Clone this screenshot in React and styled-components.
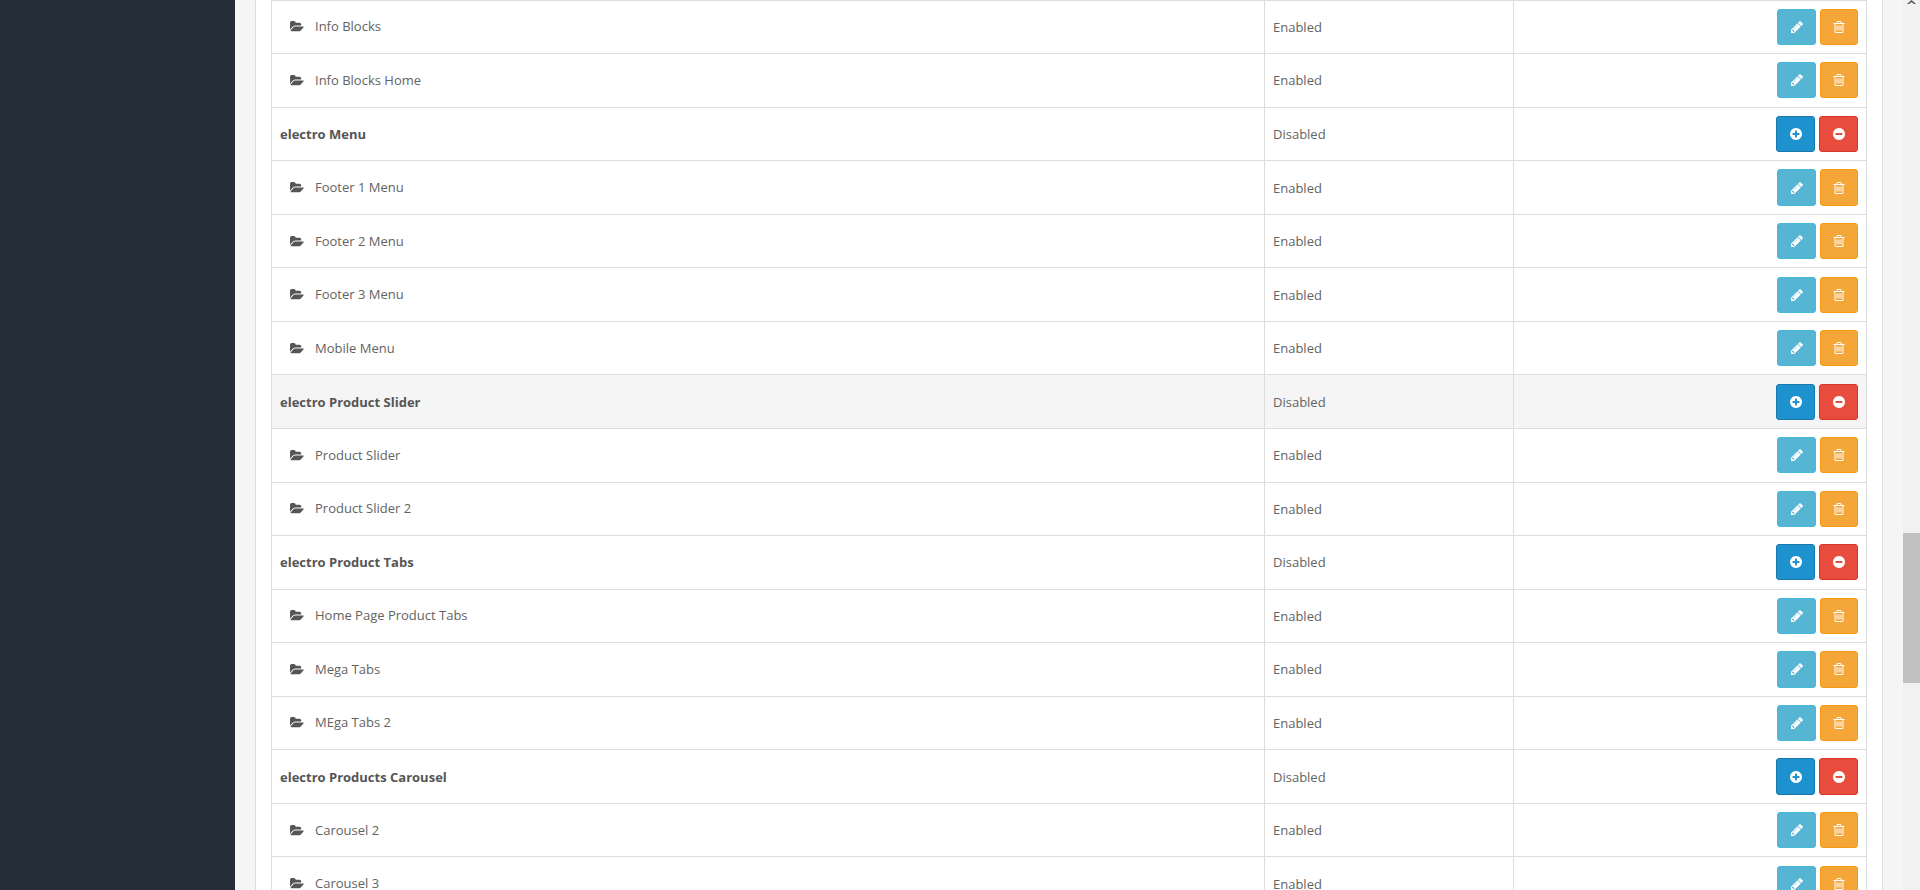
import React from "react";
import styled, { createGlobalStyle } from "styled-components";

const GlobalStyle = createGlobalStyle`
  html, body { margin: 0; padding: 0; height: 100%; overflow: hidden; }
  body { font-family: "Open Sans", sans-serif; font-size: 13px; color: #636363; background: #f5f5f5; }
`;

const Page = styled.div`
  display: flex;
  height: 890px;
  overflow: hidden;
`;
const Sidebar = styled.aside`
  width: 235px;
  flex: none;
  background: #252d39;
`;
const Content = styled.main`
  flex: 1;
  padding: 0 20px;
  min-width: 0;
`;
const Panel = styled.section`
  background: #fff;
  border-left: 1px solid #ddd;
  border-right: 1px solid #ddd;
  padding: 0 15px;
  height: 890px;
  overflow: hidden;
`;
/* the page is scrolled part way through the list */
const Table = styled.table`
  width: 100%;
  margin-top: -0.4px;
  border-collapse: collapse;
  table-layout: fixed;
`;
const Row = styled.tr`
  background: ${(p) => (p.$hover ? "#f5f5f5" : "#fff")};
`;
const Cell = styled.td`
  border: 1px solid #ddd;
  padding: 8px;
  height: 36.56px;
  vertical-align: middle;
  line-height: 18px;
`;
const GroupName = styled.b`
  font-weight: 700;
  color: #555;
`;
const ChildName = styled.span`
  display: inline-flex;
  align-items: center;
  padding: 1px 0 0 10px;
  svg { width: 14px; height: 13px; color: #555; margin: 1px 11px 0 0; }
`;
const Actions = styled.div`
  display: flex;
  justify-content: flex-end;
  gap: 4px;
`;
const Btn = styled.button`
  width: ${(p) => p.$w}px;
  height: 36.14px;
  padding: 0;
  border-radius: 3px;
  border: 1px solid ${(p) => p.$line};
  background: ${(p) => p.$fill};
  color: #fff;
  display: flex;
  align-items: center;
  justify-content: center;
  svg { width: 14px; height: 14px; }
`;
const Scrollbar = styled.div`
  width: 17px;
  flex: none;
  background: #f1f1f1;
  position: relative;
  display: flex;
  flex-direction: column;
  align-items: center;
`;
const Arrow = styled.svg`
  width: 9px;
  height: 4px;
  flex: none;
`;
const Thumb = styled.div`
  position: absolute;
  top: 533px;
  left: 0;
  width: 17px;
  height: 150px;
  background: #c1c1c1;
`;

// font awesome 4 glyph shapes
const paths = {
  folder: "M1879 952q0 31-31 66l-336 396q-43 51-120.5 86.5t-143.5 35.5h-1088q-34 0-60.5-13t-26.5-43q0-31 31-66l336-396q43-51 120.5-86.5t143.5-35.5h1088q34 0 60.5 13t26.5 43zm-343-344v160h-832q-94 0-197 47.5t-164 119.5l-337 396-5 6q0-4-.5-12.5t-.5-12.5v-960q0-92 66-158t158-66h320q92 0 158 66t66 158v32h544q92 0 158 66t66 158z",
  pencil: "M491 1536l91-91-235-235-91 91v107h128v128h107zm523-928q0-22-22-22-10 0-17 7l-542 542q-7 7-7 17 0 22 22 22 10 0 17-7l542-542q7-7 7-17zm-54-192l416 416-832 832h-416v-416zm683 96q0 53-37 90l-166 166-416-416 166-165q36-38 90-38 53 0 91 38l235 234q37 39 37 91z",
  trash: "M704 736v576q0 14-9 23t-23 9h-64q-14 0-23-9t-9-23v-576q0-14 9-23t23-9h64q14 0 23 9t9 23zm256 0v576q0 14-9 23t-23 9h-64q-14 0-23-9t-9-23v-576q0-14 9-23t23-9h64q14 0 23 9t9 23zm256 0v576q0 14-9 23t-23 9h-64q-14 0-23-9t-9-23v-576q0-14 9-23t23-9h64q14 0 23 9t9 23zm128 724v-948h-896v948q0 22 7 40.5t14.5 27 10.5 8.5h832q3 0 10.5-8.5t14.5-27 7-40.5zm-672-1076h448l-48-117q-7-9-17-11h-317q-10 2-17 11zm928 32v64q0 14-9 23t-23 9h-96v948q0 83-47 143.5t-113 60.5h-832q-66 0-113-58.5t-47-141.5v-952h-96q-14 0-23-9t-9-23v-64q0-14 9-23t23-9h309l70-167q15-37 54-63t79-26h320q40 0 79 26t54 63l70 167h309q14 0 23 9t9 23z",
  plus: "M1344 960v-128q0-26-19-45t-45-19h-256v-256q0-26-19-45t-45-19h-128q-26 0-45 19t-19 45v256h-256q-26 0-45 19t-19 45v128q0 26 19 45t45 19h256v256q0 26 19 45t45 19h128q26 0 45-19t19-45v-256h256q26 0 45-19t19-45zm320-64q0 209-103 385.5t-279.5 279.5-385.5 103-385.5-103-279.5-279.5-103-385.5 103-385.5 279.5-279.5 385.5-103 385.5 103 279.5 279.5 103 385.5z",
  minus: "M1344 960v-128q0-26-19-45t-45-19h-768q-26 0-45 19t-19 45v128q0 26 19 45t45 19h768q26 0 45-19t19-45zm320-64q0 209-103 385.5t-279.5 279.5-385.5 103-385.5-103-279.5-279.5-103-385.5 103-385.5 279.5-279.5 385.5-103 385.5 103 279.5 279.5 103 385.5z",
};

const Icon = ({ name }) => (
  <svg viewBox={name === "folder" ? "0 0 1920 1792" : "0 0 1792 1792"} fill="currentColor">
    <path d={paths[name]} />
  </svg>
);

const rows = [
  ["Info Blocks", 1], ["Info Blocks Home", 1], ["electro Menu", 0],
  ["Footer 1 Menu", 1], ["Footer 2 Menu", 1], ["Footer 3 Menu", 1], ["Mobile Menu", 1],
  ["electro Product Slider", 0, true], ["Product Slider", 1], ["Product Slider 2", 1],
  ["electro Product Tabs", 0], ["Home Page Product Tabs", 1], ["Mega Tabs", 1], ["MEga Tabs 2", 1],
  ["electro Products Carousel", 0], ["Carousel 2", 1], ["Carousel 3", 1],
];

export default function App() {
  return (
    <Page>
      <GlobalStyle />
      <Sidebar />
      <Content>
        <Panel>
          <Table>
            <colgroup>
              <col />
              <col style={{ width: 249 }} />
              <col style={{ width: 353 }} />
            </colgroup>
            <tbody>
              {rows.map(([name, child, hover]) => (
                <Row key={name} $hover={hover}>
                  <Cell>
                    {child ? (
                      <ChildName><Icon name="folder" />{name}</ChildName>
                    ) : (
                      <GroupName>{name}</GroupName>
                    )}
                  </Cell>
                  <Cell>{child ? "Enabled" : "Disabled"}</Cell>
                  <Cell>
                    <Actions>
                      {child ? (
                        <>
                          <Btn $w={39} $fill="#56b5d3" $line="#46b8da"><Icon name="pencil" /></Btn>
                          <Btn $w={38} $fill="#f4a738" $line="#f39c12"><Icon name="trash" /></Btn>
                        </>
                      ) : (
                        <>
                          <Btn $w={39} $fill="#1e91cf" $line="#1978ab"><Icon name="plus" /></Btn>
                          <Btn $w={39} $fill="#e74c3c" $line="#d9362a"><Icon name="minus" /></Btn>
                        </>
                      )}
                    </Actions>
                  </Cell>
                </Row>
              ))}
            </tbody>
          </Table>
        </Panel>
      </Content>
      <Scrollbar>
        <Arrow viewBox="0 0 9 4"><path d="M0 4 L4.5 0 L9 4 L7 4 L4.5 2 L2 4 Z" fill="#505050" /></Arrow>
        <Thumb />
      </Scrollbar>
    </Page>
  );
}
